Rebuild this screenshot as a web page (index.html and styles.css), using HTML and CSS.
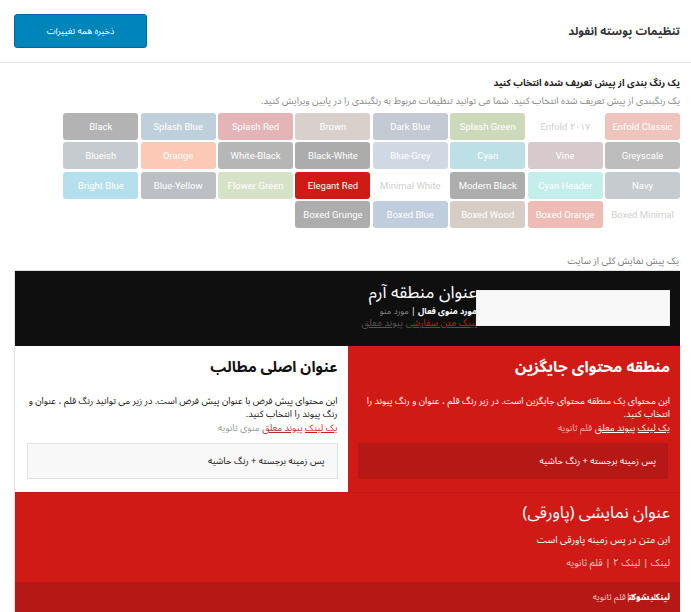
FILE: index.html
```html
<!DOCTYPE html>
<html lang="fa">
<head>
<meta charset="utf-8">
<title>تنظیمات پوسته انفولد</title>
<link rel="stylesheet" href="styles.css">
</head>
<body>
<div class="page" dir="rtl">
  <header class="top">
    <h1 class="title">تنظیمات پوسته انفولد</h1>
    <button class="save">ذخیره همه تغییرات</button>
  </header>

  <section class="section">
    <h2 class="sec-title">یک رنگ بندی از پیش تعریف شده انتخاب کنید</h2>
    <p class="desc">یک رنگبندی از پیش تعریف شده انتخاب کنید. شما می توانید تنظیمات مربوط به رنگبندی را در پایین ویرایش کنید.</p>
    <div class="grid">
      <div class="sw c-enfoldclassic">Enfold Classic</div>
      <div class="sw c-white">Enfold ۲۰۱۷</div>
      <div class="sw c-splashgreen">Splash Green</div>
      <div class="sw c-darkblue">Dark Blue</div>
      <div class="sw c-brown">Brown</div>
      <div class="sw c-splashred">Splash Red</div>
      <div class="sw c-splashblue">Splash Blue</div>
      <div class="sw c-black">Black</div>

      <div class="sw c-greyscale">Greyscale</div>
      <div class="sw c-vine">Vine</div>
      <div class="sw c-cyan">Cyan</div>
      <div class="sw c-bluegrey">Blue-Grey</div>
      <div class="sw c-blackwhite">Black-White</div>
      <div class="sw c-whiteblack">White-Black</div>
      <div class="sw c-orange">Orange</div>
      <div class="sw c-blueish">Blueish</div>

      <div class="sw c-navy">Navy</div>
      <div class="sw c-cyanheader">Cyan Header</div>
      <div class="sw c-modernblack">Modern Black</div>
      <div class="sw c-white">Minimal White</div>
      <div class="sw c-elegantred">Elegant Red</div>
      <div class="sw c-flowergreen">Flower Green</div>
      <div class="sw c-blueyellow">Blue-Yellow</div>
      <div class="sw c-brightblue">Bright Blue</div>

      <div class="sw c-white">Boxed Minimal</div>
      <div class="sw c-boxedorange">Boxed Orange</div>
      <div class="sw c-boxedwood">Boxed Wood</div>
      <div class="sw c-boxedblue">Boxed Blue</div>
      <div class="sw c-boxedgrunge">Boxed Grunge</div>
    </div>
  </section>

  <p class="preview-label">یک پیش نمایش کلی از سایت</p>

  <div class="preview">
    <div class="pv-header">
      <div class="logo-box"></div>
      <div class="pv-header-text">
        <div class="pv-logo">عنوان منطقه آرم</div>
        <div class="pv-menu"><b>مورد منوی فعال</b> | <span class="muted">مورد منو</span></div>
        <div class="pv-links"><a class="hl">لینک متن سفارشی</a> <a class="hover">پیوند معلق</a></div>
      </div>
    </div>

    <div class="pv-body">
      <div class="col alt">
        <h3 class="col-title">منطقه محتوای جایگزین</h3>
        <p class="col-text">این محتوای یک منطقه محتوای جایگزین است. در زیر رنگ قلم ، عنوان و رنگ پیوند را انتخاب کنید.</p>
        <p class="col-links"><a>یک لینک</a> <a>پیوند معلق</a> <span class="sec">قلم ثانویه</span></p>
        <div class="hbox">پس زمینه برجسته + رنگ حاشیه</div>
      </div>
      <div class="col main">
        <h3 class="col-title">عنوان اصلی مطالب</h3>
        <p class="col-text">این محتوای پیش فرض با عنوان پیش فرض است. در زیر می توانید رنگ قلم ، عنوان و رنگ پیوند را انتخاب کنید.</p>
        <p class="col-links"><a class="l1">یک لینک</a> <a class="l2">پیوند معلق</a> <span class="sec">منوی ثانویه</span></p>
        <div class="hbox">پس زمینه برجسته + رنگ حاشیه</div>
      </div>
    </div>

    <div class="pv-footer">
      <h3 class="ft-title">عنوان نمایشی (پاورقی)</h3>
      <p class="ft-text">این متن در پس زمینه پاورقی است</p>
      <p class="ft-links">لینک | لینک ۲ | قلم ثانویه</p>
    </div>
    <div class="pv-socket">
      <p class="sk-text"><b>لینک سوکت</b><span class="sk-over">لینک ۲</span>|قلم ثانویه</p>
    </div>
  </div>
</div>
</body>
</html>
```

FILE: styles.css
```css
* { box-sizing: border-box; }
html, body { margin: 0; padding: 0; background: #fff; }
body { font-family: "Noto Sans Arabic", "DejaVu Sans Condensed", "DejaVu Sans", sans-serif; color: #333; }

.page { width: 691px; }

.top {
  display: flex;
  align-items: center;
  justify-content: space-between;
  padding: 14px 11px 14px 14px;
  border-bottom: 1px solid #e1e1e1;
  height: 63px;
}
.title {
  margin: 0;
  font-size: 11.5px;
  font-weight: bold;
  color: #333;
}
.save {
  width: 133px;
  height: 34px;
  background: #0085ba;
  border: 1px solid #006799;
  border-radius: 3px;
  color: #fff;
  font-family: inherit;
  font-size: 9px;
  padding: 0;
}

.section { padding: 13px 11px 0 11px; }
.sec-title {
  margin: 0;
  font-size: 9.5px;
  font-weight: bold;
  color: #222;
  line-height: 14px;
}
.desc {
  margin: 5px 0 0 0;
  font-size: 9.5px;
  color: #888;
  line-height: 13px;
}
.grid {
  margin-top: 5px;
  display: grid;
  grid-template-columns: repeat(8, 75px);
  column-gap: 2.4px;
  row-gap: 2.3px;
  justify-content: start;
}
.sw {
  height: 27px;
  border-radius: 3px;
  font-family: Roboto, "Liberation Sans", sans-serif;
  font-size: 9.5px;
  color: #fff;
  display: flex;
  align-items: center;
  justify-content: center;
  white-space: nowrap;
}
.c-white { background: #fff; color: #cfcfcf; }
.c-enfoldclassic { background: #efc4bc; }
.c-splashgreen { background: #cddab9; }
.c-darkblue { background: #c4cad4; }
.c-brown { background: #d9d0cc; }
.c-splashred { background: #e4b4b6; }
.c-splashblue { background: #c0cfdc; }
.c-black { background: #b3b3b3; }
.c-greyscale { background: #bdbdbd; }
.c-vine { background: #d8c9cd; }
.c-cyan { background: #bde0e6; }
.c-bluegrey { background: #d0d9e3; }
.c-blackwhite { background: #acacac; }
.c-whiteblack { background: #b6b6b6; }
.c-orange { background: #fcc9b6; }
.c-blueish { background: #c6cbd0; }
.c-navy { background: #c5cbcf; }
.c-cyanheader { background: #c4eeeb; }
.c-modernblack { background: #aeadad; }
.c-elegantred { background: #d01a15; }
.c-flowergreen { background: #d6e2c7; }
.c-blueyellow { background: #bcc0c5; }
.c-brightblue { background: #b4dfec; }
.c-boxedorange { background: #eebbb5; }
.c-boxedwood { background: #d7cdc7; }
.c-boxedblue { background: #c0cddc; }
.c-boxedgrunge { background: #adadad; }

.preview-label {
  margin: 27px 12px 0 0;
  font-size: 9.5px;
  color: #777;
  line-height: 13px;
}

.preview {
  margin: 2px 11px 0 14px;
  border-left: 1px solid #e1e1e1;
  border-top: 1px solid #e1e1e1;
}
.pv-header {
  position: relative;
  background: #0f0f0f;
  height: 75px;
  padding: 10px 203px 0 0;
}
.logo-box {
  position: absolute;
  top: 19px;
  right: 10px;
  width: 194px;
  height: 36px;
  background: #f8f8f8;
  border: 1px solid #eee;
}
.pv-logo {
  color: #fff;
  font-size: 17px;
  line-height: 24px;
}
.pv-menu {
  margin-top: 0;
  font-size: 8.5px;
  color: #fff;
  line-height: 12px;
}
.pv-menu .muted { color: #888; }
.pv-links {
  font-size: 9.5px;
  line-height: 13px;
}
.pv-links a { text-decoration: underline; }
.pv-links .hl { color: #c0201a; }
.pv-links .hover { color: #555; }

.pv-body {
  display: flex;
}
.col {
  width: 333px;
  height: 146px;
  padding: 10px 10px 0 12px;
}
.col.alt { background: #d01a15; color: #fff; }
.col.main { background: #fff; color: #111; }
.col-title {
  margin: 0;
  font-size: 15px;
  font-weight: bold;
  line-height: 22px;
}
.alt .col-title { font-size: 15.5px; }
.col-text {
  margin: 17px 0 0 0;
  font-size: 9.3px;
  line-height: 13.5px;
}
.col-links {
  margin: 0;
  font-size: 9.3px;
  line-height: 13.5px;
}
.col-links a { text-decoration: underline; }
.alt .col-links a { color: #fff; }
.alt .col-links .sec { color: #f1b0ad; }
.main .col-links .l1 { color: #d01a15; }
.main .col-links .l2 { color: #b0302a; }
.main .col-links .sec { color: #999; }
.hbox {
  margin-top: 8px;
  height: 36px;
  display: flex;
  align-items: center;
  padding-right: 12px;
  font-size: 9.3px;
}
.alt .hbox { background: #b51815; color: #fff; margin-left: -2px; margin-right: 2px; }
.main .hbox { background: #f8f8f8; border: 1px solid #e1e1e1; color: #111; }

.pv-footer {
  background: #d01a15;
  border-top: 1px solid #c01813;
  height: 90px;
  padding: 8px 10px 0 0;
  color: #fff;
}
.ft-title {
  margin: 0;
  font-size: 16.5px;
  font-weight: normal;
  line-height: 24px;
}
.ft-text {
  margin: 8px 0 0 0;
  font-size: 9.8px;
  line-height: 14px;
}
.ft-links {
  margin: 9px 0 0 0;
  font-size: 9.8px;
  line-height: 14px;
  color: #f4c4c2;
}
.pv-socket {
  background: #b51815;
  height: 40px;
  padding: 9px 10px 0 0;
  color: #fff;
}
.sk-text {
  margin: 0;
  font-size: 9px;
  line-height: 14px;
  color: #f4c4c2;
}
.sk-text b { color: #fff; }
.sk-over { margin-right: -28px; color: #fff; }
```
